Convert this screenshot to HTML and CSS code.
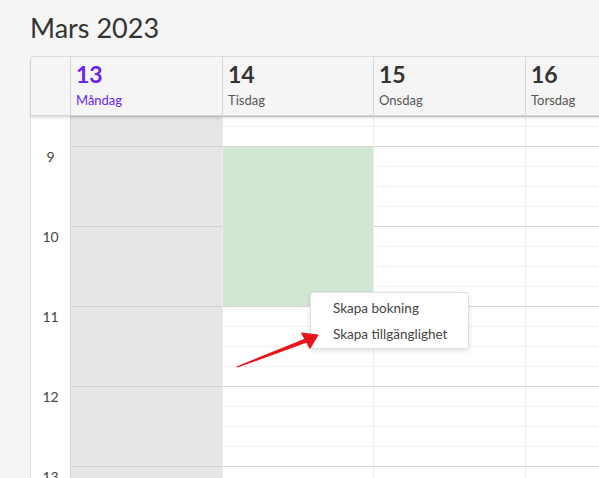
FILE: index.html
```html
<!DOCTYPE html>
<html lang="sv">
<head>
<meta charset="utf-8">
<title>Mars 2023</title>
<link rel="stylesheet" href="styles.css">
</head>
<body>
<h1 class="title">Mars 2023</h1>
<div class="calendar">
  <div class="head">
    <div class="corner"></div>
    <div class="dayhead today"><span class="num">13</span><span class="name">Måndag</span></div>
    <div class="dayhead"><span class="num">14</span><span class="name">Tisdag</span></div>
    <div class="dayhead"><span class="num">15</span><span class="name">Onsdag</span></div>
    <div class="dayhead"><span class="num">16</span><span class="name">Torsdag</span></div>
  </div>
  <div class="grid">
    <div class="times">
      <div class="lead"></div>
      <div class="hour">9</div>
      <div class="hour">10</div>
      <div class="hour">11</div>
      <div class="hour">12</div>
      <div class="hour">13</div>
    </div>
    <div class="col closed"></div>
    <div class="col"><div class="avail"></div></div>
    <div class="col"></div>
    <div class="col"></div>
  </div>
  <div class="menu">
    <div class="item">Skapa bokning</div>
    <div class="item">Skapa tillgänglighet</div>
  </div>
  <svg class="arrow" width="95" height="50" viewBox="0 0 95 50">
    <polygon points="6.6,41.4 75.3,13.4 76.9,17.6 7.4,42.6" fill="#e8141a"/>
    <polygon points="88,10 71.5,8 80,23.5" fill="#e8141a" stroke="#e8141a" stroke-width="1" stroke-linejoin="round"/>
  </svg>
</div>
</body>
</html>
```
FILE: styles.css
```css
html, body {
  margin: 0;
  padding: 0;
  background: #f5f5f5;
  font-family: "Lato", "Liberation Sans", sans-serif;
  color: #333;
  overflow: hidden;
}
.title {
  margin: 0;
  padding: 13px 0 0 30px;
  height: 56px;
  box-sizing: border-box;
  font-size: 27px;
  line-height: 30px;
  font-weight: 400;
  color: #333;
}
.calendar {
  position: relative;
  margin-left: 30px;
  width: 640px;
  height: 430px;
  border-left: 1px solid #dcdcdc;
  border-top: 1px solid #dcdcdc;
  border-top-left-radius: 4px;
  background: #fff;
}
.head {
  position: relative;
  z-index: 2;
  display: grid;
  grid-template-columns: 39px 152px 151px 152px 152px;
  height: 58px;
  background: #f5f5f5;
  border-bottom: 1px solid #d6d6d6;
  box-shadow: 0 2px 3px rgba(0,0,0,0.12);
  border-top-left-radius: 4px;
}
.dayhead {
  display: flex;
  flex-direction: column;
  border-left: 1px solid #d6d6d6;
  padding: 4px 0 0 5px;
}
.num {
  font-size: 23px;
  line-height: 26px;
  font-weight: 700;
  color: #333;
}
.name {
  margin-top: 5px;
  font-size: 13px;
  line-height: 16px;
  color: #555;
}
.today .num, .today .name {
  color: #6c22f0;
}
.grid {
  display: grid;
  grid-template-columns: 39px 152px 151px 152px 152px;
  height: 371px;
}
.times {
  display: flex;
  flex-direction: column;
  background: #fff;
}
.lead { height: 30px; flex: none; }
.hour {
  flex: none;
  height: 80px;
  box-sizing: border-box;
  padding-top: 2px;
  text-align: center;
  font-size: 14px;
  line-height: 18px;
  color: #444;
}
.col {
  position: relative;
  border-left: 1px solid #ececec;
  background-image:
    repeating-linear-gradient(to bottom, #d4d4d4 0, #d4d4d4 1px, transparent 1px, transparent 80px),
    repeating-linear-gradient(to bottom, #f0f0f0 0, #f0f0f0 1px, transparent 1px, transparent 20px);
  background-position: 0 30px, 0 10px;
  background-color: #fff;
}
.col.closed {
  border-left-color: #d6d6d6;
  background-color: #e6e6e6;
  background-image:
    repeating-linear-gradient(to bottom, #cfcfcf 0, #cfcfcf 1px, transparent 1px, transparent 80px),
    repeating-linear-gradient(to bottom, #e2e2e2 0, #e2e2e2 1px, transparent 1px, transparent 20px);
}
.avail {
  position: absolute;
  left: 0;
  top: 31px;
  width: 150px;
  height: 159px;
  background: #d2e7d3;
}
.menu {
  position: absolute;
  z-index: 3;
  left: 279px;
  top: 235px;
  width: 159px;
  height: 57px;
  box-sizing: border-box;
  padding: 2px 0 0 22px;
  background: #fff;
  border: 1px solid #e0e0e0;
  border-radius: 3px;
  box-shadow: 0 2px 5px rgba(0,0,0,0.12);
}
.item {
  font-size: 13.5px;
  line-height: 26px;
  color: #444;
  white-space: nowrap;
}
.arrow {
  position: absolute;
  z-index: 4;
  left: 199px;
  top: 268px;
}
```
